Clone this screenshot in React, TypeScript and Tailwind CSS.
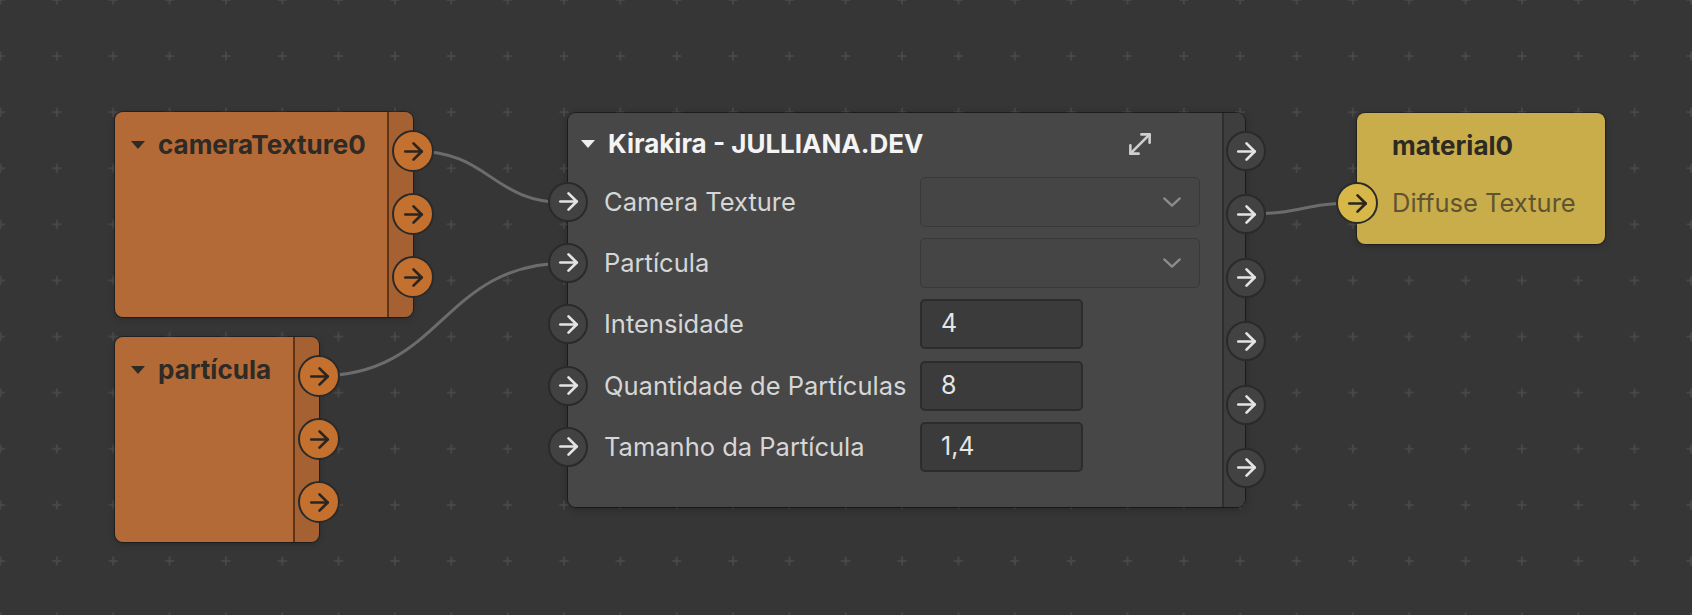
import React from 'react';

type PortTone = 'orange' | 'gray' | 'yellow';

const portStyles: Record<PortTone, string> = {
  orange: 'bg-[#c4702f] text-[#2a2520]',
  gray: 'bg-[#424242] text-[#e4e4e4]',
  yellow: 'bg-[#d6b748] text-[#2a2520]',
};

function Port({ tone, size = 42 }: { tone: PortTone; size?: number }) {
  return (
    <div
      className={`flex shrink-0 items-center justify-center rounded-full border-2 border-[#2a2a2a] ${portStyles[tone]}`}
      style={{ width: size, height: size }}
    >
      <svg width="21" height="21" viewBox="3 3 18 18" fill="none" stroke="currentColor" strokeWidth="2.3" strokeLinecap="round" strokeLinejoin="round">
        <path d="M5 12h14" />
        <path d="m12 5 7 7-7 7" />
      </svg>
    </div>
  );
}

function Caret({ color }: { color: string }) {
  return (
    <svg width="16" height="10" viewBox="0 0 16 10" className="shrink-0">
      <polygon points="1,1 15,1 8,9" fill={color} />
    </svg>
  );
}

function OrangeNode({ title, left, top, width }: { title: string; left: number; top: number; width: number }) {
  return (
    <div
      className="absolute flex h-[205px] rounded-[8px] shadow-[0_0_0_1px_rgba(0,0,0,0.35),0_2px_6px_rgba(0,0,0,0.25)]"
      style={{ left, top }}
    >
      <div className="flex flex-col rounded-l-[8px] bg-[#b36a36] pl-[15px] pt-[20px]" style={{ width }}>
        <div className="flex items-center gap-[12px]">
          <Caret color="#2e2a26" />
          <span className="text-[26px] font-bold leading-[26px] text-[#2e2a26]">{title}</span>
        </div>
      </div>
      <div className="relative w-[26px] rounded-r-[8px] border-l-2 border-[#5e3519] bg-[#a66133]">
        <div className="absolute right-[-21px] top-[18px] flex flex-col gap-[21px]">
          <Port tone="orange" />
          <Port tone="orange" />
          <Port tone="orange" />
        </div>
      </div>
    </div>
  );
}

function Chevron() {
  return (
    <svg width="18" height="10" viewBox="5 8.5 14 7.5" fill="none" stroke="#8c8c8c" strokeWidth="1.8" strokeLinecap="round" strokeLinejoin="round">
      <path d="m6 9.5 6 5.5 6-5.5" />
    </svg>
  );
}

function Row({ label, children }: { label: string; children: React.ReactNode }) {
  return (
    <div className="flex h-[61.3px] items-center">
      <div className="ml-[-20px]">
        <Port tone="gray" size={40} />
      </div>
      <span className="ml-[16px] w-[316px] text-[25.5px] leading-[28px] text-[#d6d6d6]">{label}</span>
      {children}
    </div>
  );
}

function Select() {
  return (
    <div className="flex h-[50px] w-[280px] items-center justify-end rounded-[5px] border border-[#393939] bg-[#454545] pr-[18px]">
      <Chevron />
    </div>
  );
}

function NumberBox({ value }: { value: string }) {
  return (
    <div className="flex h-[50px] w-[163px] items-center rounded-[5px] border-2 border-[#2c2c2c] bg-[#3b3b3b] pl-[19px] text-[25px] text-[#e6e6e6]">
      {value}
    </div>
  );
}

function ShaderNode() {
  return (
    <div className="absolute left-[568px] top-[113px] flex h-[394px] rounded-[8px] shadow-[0_0_0_1px_rgba(0,0,0,0.4),0_2px_8px_rgba(0,0,0,0.3)]">
      <div className="flex w-[654px] flex-col rounded-l-[8px] bg-[#474747]">
        <div className="flex h-[58px] items-center pl-[12px] pr-[71px] pt-[4px]">
          <Caret color="#efefef" />
          <span className="ml-[12px] text-[26px] font-bold leading-[28px] text-[#f4f4f4]">Kirakira - JULLIANA.DEV</span>
          <svg className="ml-auto" width="22" height="22" viewBox="4 4 16 16" fill="none" stroke="#cfcfcf" strokeWidth="1.9" strokeLinecap="round" strokeLinejoin="round">
            <polyline points="13 5 19 5 19 11" />
            <polyline points="11 19 5 19 5 13" />
            <line x1="19" y1="5" x2="5" y2="19" />
          </svg>
        </div>
        <div className="flex flex-col">
          <Row label="Camera Texture"><Select /></Row>
          <Row label="Partícula"><Select /></Row>
          <Row label="Intensidade"><NumberBox value="4" /></Row>
          <Row label="Quantidade de Partículas"><NumberBox value="8" /></Row>
          <Row label="Tamanho da Partícula"><NumberBox value="1,4" /></Row>
        </div>
      </div>
      <div className="relative w-[23px] rounded-r-[8px] border-l-2 border-[#2e2e2e] bg-[#3e3e3e]">
        <div className="absolute right-[-21px] top-[18px] flex flex-col gap-[23.4px]">
          {[0, 1, 2, 3, 4, 5].map((i) => (
            <Port key={i} tone="gray" size={40} />
          ))}
        </div>
      </div>
    </div>
  );
}

function MaterialNode() {
  return (
    <div className="absolute left-[1357px] top-[113px] flex h-[131px] w-[248px] flex-col rounded-[8px] bg-[#c9ad4b] shadow-[0_0_0_1px_rgba(0,0,0,0.3),0_2px_6px_rgba(0,0,0,0.25)]">
      <div className="flex h-[64px] items-center pl-[35px] pt-[2px]">
        <span className="text-[26px] font-bold leading-[28px] text-[#2c2a22]">material0</span>
      </div>
      <div className="flex h-[52px] items-center">
        <div className="ml-[-21px]">
          <Port tone="yellow" />
        </div>
        <span className="ml-[14px] text-[25.5px] leading-[28px] text-[#5f5430]">Diffuse Texture</span>
      </div>
    </div>
  );
}

export default function App() {
  return (
    <div
      className="relative h-[615px] w-[1692px] overflow-hidden bg-[#363636]"
      style={{ fontFamily: 'Inter, "Noto Sans", "Liberation Sans", sans-serif' }}
    >
      <svg className="absolute inset-0" width="1692" height="615">
        <defs>
          <pattern id="grid" x="0.5" y="0" width="56.35" height="56.1" patternUnits="userSpaceOnUse">
            <path d="M0 -4.5V4.5M-4.5 0H4.5" stroke="#4b4b4b" strokeWidth="1.6" />
            <path d="M56.35 -4.5V4.5M51.85 0H60.85" stroke="#4b4b4b" strokeWidth="1.6" />
            <path d="M0 51.6V60.6M-4.5 56.1H4.5" stroke="#4b4b4b" strokeWidth="1.6" />
            <path d="M56.35 51.6V60.6M51.85 56.1H60.85" stroke="#4b4b4b" strokeWidth="1.6" />
          </pattern>
        </defs>
        <rect width="1692" height="615" fill="url(#grid)" />
        <g fill="none" stroke="#6c6c6c" strokeWidth="3">
          <path d="M413 151 C 492 151, 490 203, 568 203" />
          <path d="M318 376 C 445 376, 440 263, 568 263" />
          <path d="M1246 214 C 1305 214, 1300 203, 1357 203" />
        </g>
      </svg>

      <OrangeNode title="cameraTexture0" left={115} top={112} width={272} />
      <OrangeNode title="partícula" left={115} top={337} width={178} />
      <ShaderNode />
      <MaterialNode />
    </div>
  );
}
